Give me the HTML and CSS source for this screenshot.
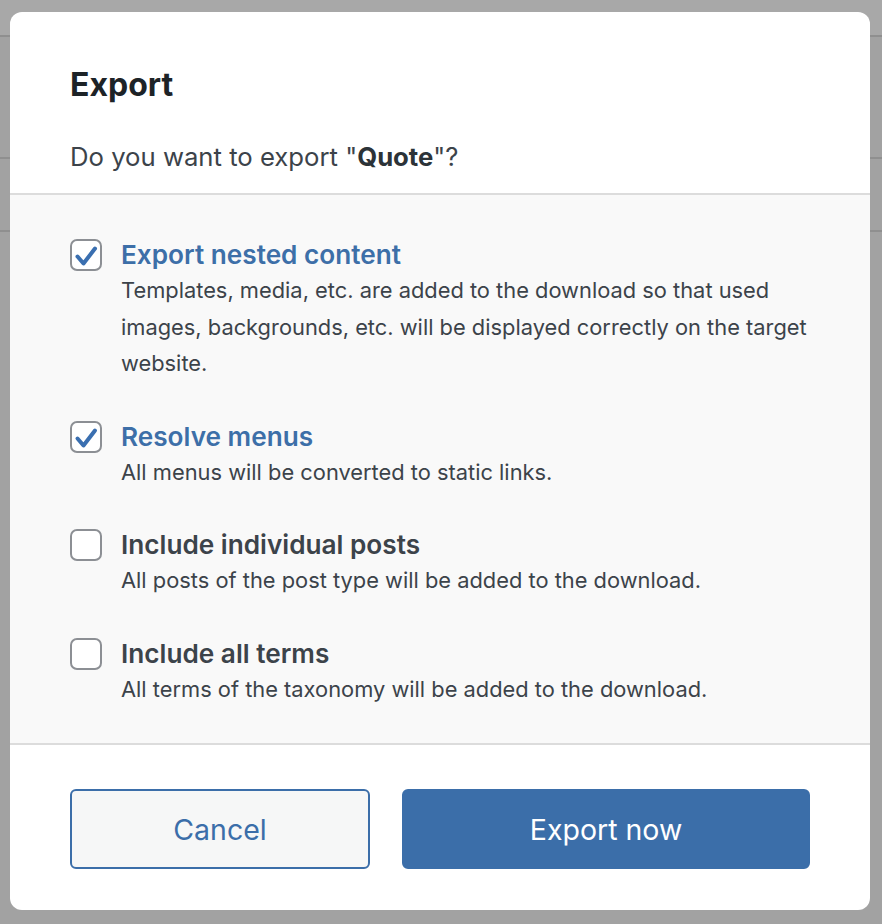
FILE: index.html
```html
<!DOCTYPE html>
<html lang="en">
<head>
<meta charset="utf-8">
<title>Export</title>
<link rel="stylesheet" href="styles.css">
</head>
<body>
<div class="backdrop">
  <div class="modal">
    <header class="modal-header">
      <h1 class="modal-title">Export</h1>
      <p class="modal-question">Do you want to export "<strong>Quote</strong>"?</p>
    </header>
    <section class="modal-body">
      <div class="option">
        <span class="check is-checked">
          <svg viewBox="0 0 32 32" width="32" height="32"><path d="M7.5 17.5 L13.5 24.5 L25 9.5" fill="none" stroke="#3a6fb0" stroke-width="4" stroke-linecap="round" stroke-linejoin="round"/></svg>
        </span>
        <div class="option-text">
          <div class="option-label is-active">Export nested content</div>
          <div class="option-desc">Templates, media, etc. are added to the download so that used<br>images, backgrounds, etc. will be displayed correctly on the target<br>website.</div>
        </div>
      </div>
      <div class="option">
        <span class="check is-checked">
          <svg viewBox="0 0 32 32" width="32" height="32"><path d="M7.5 17.5 L13.5 24.5 L25 9.5" fill="none" stroke="#3a6fb0" stroke-width="4" stroke-linecap="round" stroke-linejoin="round"/></svg>
        </span>
        <div class="option-text">
          <div class="option-label is-active">Resolve menus</div>
          <div class="option-desc">All menus will be converted to static links.</div>
        </div>
      </div>
      <div class="option">
        <span class="check"></span>
        <div class="option-text">
          <div class="option-label">Include individual posts</div>
          <div class="option-desc">All posts of the post type will be added to the download.</div>
        </div>
      </div>
      <div class="option">
        <span class="check"></span>
        <div class="option-text">
          <div class="option-label">Include all terms</div>
          <div class="option-desc">All terms of the taxonomy will be added to the download.</div>
        </div>
      </div>
    </section>
    <footer class="modal-footer">
      <button class="btn btn-secondary" type="button">Cancel</button>
      <button class="btn btn-primary" type="button">Export now</button>
    </footer>
  </div>
</div>
</body>
</html>
```
FILE: styles.css
```css
* { box-sizing: border-box; }

html, body {
  margin: 0;
  padding: 0;
}

body {
  width: 882px;
  height: 924px;
  overflow: hidden;
  font-family: Inter, "Noto Sans", "Liberation Sans", sans-serif;
  background-color: #a2a2a2;
  background-image:
    linear-gradient(#8f8f8f, #8f8f8f),
    linear-gradient(#8f8f8f, #8f8f8f),
    linear-gradient(#8f8f8f, #8f8f8f),
    linear-gradient(#a8a8a8, #a8a8a8);
  background-repeat: no-repeat;
  background-size: 100% 2px, 100% 2px, 100% 2px, 100% 36px;
  background-position: 0 35px, 0 157px, 0 230px, 0 0;
}

.backdrop {
  padding: 12px 12px 14px 10px;
}

.modal {
  width: 860px;
  height: 898px;
  background: #ffffff;
  border-radius: 12px;
  overflow: hidden;
  display: flex;
  flex-direction: column;
}

.modal-header {
  padding: 55px 60px 20px;
  border-bottom: 2px solid #dcdcdc;
}

.modal-title {
  margin: 0;
  font-size: 32px;
  line-height: 36px;
  font-weight: 700;
  color: #1d2327;
}

.modal-question {
  margin: 38px 0 0;
  font-size: 25.7px;
  line-height: 32px;
  color: #3c434a;
}

.modal-question strong {
  font-weight: 700;
  color: #2c3338;
}

.modal-body {
  flex: 1;
  background: #f9f9f9;
  padding: 43px 20px 36px 60px;
  display: flex;
  flex-direction: column;
  gap: 38px;
}

.option {
  display: grid;
  grid-template-columns: 32px 1fr;
  column-gap: 19px;
  align-items: start;
}

.check {
  width: 32px;
  height: 32px;
  margin-top: 1px;
  border: 2px solid #8c8f94;
  border-radius: 7px;
  background: #ffffff;
  position: relative;
  display: block;
}

.check svg {
  position: absolute;
  left: -2px;
  top: -2px;
}

.option-label {
  font-size: 26.2px;
  line-height: 34px;
  font-weight: 600;
  color: #3c434a;
}

.option-label.is-active {
  color: #3d6fa8;
}

.option-desc {
  font-size: 21.85px;
  line-height: 36.5px;
  color: #3c434a;
  white-space: nowrap;
}

.modal-footer {
  border-top: 2px solid #dcdcdc;
  padding: 44px 60px 41px;
  display: grid;
  grid-template-columns: 300px 1fr;
  column-gap: 32px;
}

.btn {
  height: 80px;
  border-radius: 6px;
  font-family: inherit;
  font-size: 28.5px;
  cursor: pointer;
}

.btn-secondary {
  background: #f6f7f7;
  border: 2px solid #3b6ea9;
  color: #3b6ea9;
}

.btn-primary {
  background: #3b6ea9;
  border: 2px solid #3b6ea9;
  color: #ffffff;
}
```
